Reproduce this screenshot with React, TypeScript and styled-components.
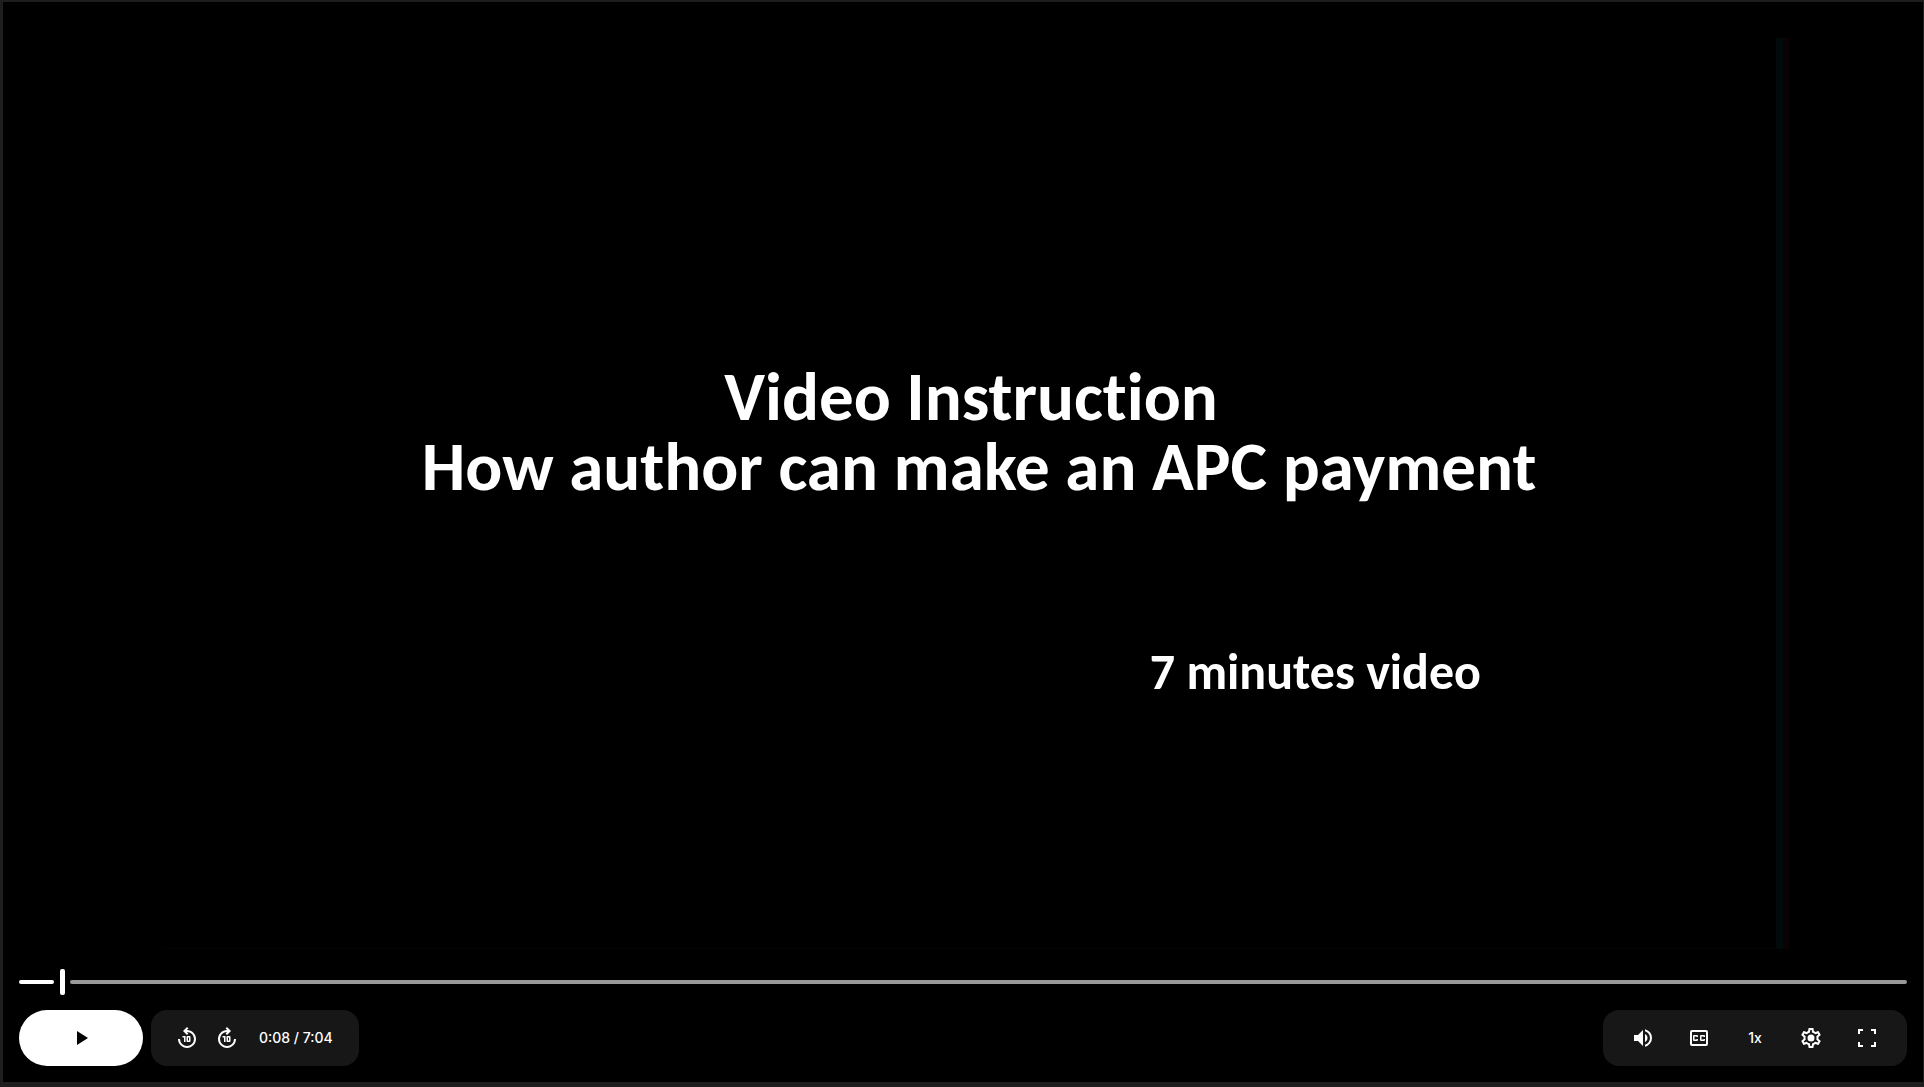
import React, { useState } from "react";
import styled, { createGlobalStyle } from "styled-components";

const GlobalStyle = createGlobalStyle`
  * { box-sizing: border-box; }
  body { margin: 0; background: #1e1e1e; }
`;

const Page = styled.div`
  min-height: 100vh;
  display: flex;
  padding: 2px 1px 5px 3px;
  background: #1e1e1e;
  color: #fff;
  font-family: Inter, Roboto, "Liberation Sans", sans-serif;
`;

const Player = styled.main`
  flex: 1;
  min-width: 0;
  display: flex;
  flex-direction: column;
  background: #000;
`;

const Frame = styled.section`
  flex: 1;
  display: flex;
  margin: 36px 140px 20px 160px;
  border-right: 7px solid #010b0b;
  border-bottom: 1px solid #040408;
  box-shadow: 6px 0 0 #0b0203;
  font-family: Carlito, Lato, "Open Sans", sans-serif;
  font-weight: 700;
  font-variant-ligatures: none;
`;

const Slide = styled.div`
  flex: 1;
  display: flex;
  flex-direction: column;
  padding-top: 324px;
`;

const Title = styled.h1`
  margin: 0;
  padding-left: 19px;
  font-size: 69px;
  line-height: 70px;
  text-align: center;
`;

const TitleLine = styled.span<{ $shift?: number }>`
  display: block;
  padding-right: ${(p) => p.$shift ?? 0}px;
`;

const Duration = styled.p`
  margin: 142px 295px 0 0;
  font-size: 50px;
  line-height: 56px;
  text-align: right;
`;

const Timeline = styled.div`
  position: relative;
  display: flex;
  align-items: center;
  gap: 5px;
  height: 26px;
  margin: 0 16px;
`;

const Track = styled.span<{ $played?: boolean }>`
  height: 4px;
  flex: ${(p) => (p.$played ? "0 0 35px" : "1")};
  border-radius: 2px;
  background: ${(p) => (p.$played ? "#fff" : "#999")};
`;

const Handle = styled.span`
  width: 5px;
  height: 26px;
  margin-left: 1px;
  border-radius: 2px;
  background: #fff;
`;

const Seek = styled.input`
  position: absolute;
  inset: 0;
  width: 100%;
  margin: 0;
  opacity: 0;
  cursor: pointer;
`;

const Controls = styled.div`
  display: flex;
  gap: 8px;
  padding: 15px 16px 16px;
`;

const PlayButton = styled.button`
  display: flex;
  align-items: center;
  justify-content: center;
  width: 124px;
  height: 56px;
  padding: 0;
  border: 0;
  border-radius: 28px;
  background: #fff;
  color: #000;
  cursor: pointer;
`;

const Group = styled.div<{ $end?: boolean }>`
  display: flex;
  align-items: center;
  height: 56px;
  padding: 0 ${(p) => (p.$end ? 12 : 16)}px;
  margin-left: ${(p) => (p.$end ? "auto" : "0")};
  border-radius: 16px;
  background: #171717;
`;

const ControlButton = styled.button<{ $wide?: boolean }>`
  display: flex;
  align-items: center;
  justify-content: center;
  width: ${(p) => (p.$wide ? 56 : 40)}px;
  height: 40px;
  padding: 0;
  border: 0;
  background: none;
  color: #fff;
  font: 500 14px/20px Inter, Roboto, sans-serif;
  cursor: pointer;
`;

const Time = styled.span`
  width: 96px;
  padding-left: 12px;
  font-size: 14px;
  font-weight: 500;
  line-height: 20px;
  white-space: pre;
`;

const Icon = ({ d }: { d: string }) => (
  <svg width="24" height="24" viewBox="0 0 24 24" fill="currentColor" fillRule="evenodd" aria-hidden="true">
    <path d={d} />
  </svg>
);

const TEN =
  "M9 16v-4.5H7.5V10h3v6zM12.5 16q-.425 0-.712-.288T11.5 15v-4q0-.425.288-.712T12.5 10h2q.425 0 .713.288t.287.712v4q0 .425-.288.713T14.5 16zm.5-1.5h1v-3h-1z";

const icons = {
  play: "M8 5v14l11-7z",
  back:
    "M12 22q-1.875 0-3.512-.712t-2.85-1.925t-1.925-2.85T3 13h2q0 2.925 2.038 4.963T12 20t4.963-2.037T19 13t-2.037-4.962T12 6h-.15l1.55 1.55L12 9L8 5l4-4l1.4 1.45L11.85 4H12q1.875 0 3.513.713t2.85 1.925t1.925 2.85T21 13t-.712 3.513t-1.925 2.85t-2.85 1.925T12 22" + TEN,
  forward:
    "M12 22q-1.875 0-3.512-.712t-2.85-1.925t-1.925-2.85T3 13t.713-3.512t1.924-2.85t2.85-1.925T12 4h.15L10.6 2.45L12 1l4 4l-4 4l-1.4-1.45L12.15 6H12Q9.075 6 7.038 8.038T5 13t2.038 4.963T12 20t4.963-2.037T19 13h2q0 1.875-.712 3.513t-1.925 2.85t-2.85 1.925T12 22" + TEN,
  volume:
    "M14 20.725v-2.05q2.25-.65 3.625-2.5t1.375-4.2t-1.375-4.2T14 5.275v-2.05q3.1.7 5.05 3.138T21 11.975t-1.95 5.613T14 20.725M3 15V9h4l5-5v16l-5-5zm11 1V7.95q1.175.55 1.838 1.65T16.5 12q0 1.275-.663 2.363T14 16",
  captions:
    "M5 4h14a2 2 0 0 1 2 2v12a2 2 0 0 1-2 2H5a2 2 0 0 1-2-2V6a2 2 0 0 1 2-2zm0 2v12h14V6zM7 9h3a1 1 0 0 1 1 1v1H9.500v-.5h-2v3h2V13H11v1a1 1 0 0 1-1 1H7a1 1 0 0 1-1-1v-4a1 1 0 0 1 1-1zM14 9h3a1 1 0 0 1 1 1v1h-1.500v-.5h-2v3h2V13H18v1a1 1 0 0 1-1 1h-3a1 1 0 0 1-1-1v-4a1 1 0 0 1 1-1z",
  settings:
    "M19.43 12.98c.04-.32.07-.64.07-.98 0-.34-.03-.66-.07-.98l2.11-1.65c.19-.15.24-.42.12-.64l-2-3.46c-.09-.16-.26-.25-.44-.25-.06 0-.12.01-.17.03l-2.49 1c-.52-.4-1.08-.73-1.69-.98l-.38-2.65C14.460 2.180 14.250 2 14 2h-4c-.25 0-.46.18-.49.42l-.38 2.65c-.61.25-1.17.59-1.69.98l-2.49-1c-.06-.02-.12-.03-.18-.03-.17 0-.34.09-.43.25l-2 3.460c-.13.22-.07.49.12.64l2.110 1.650c-.04.32-.07.65-.07.98 0 .33.03.66.07.98l-2.110 1.650c-.19.15-.24.42-.12.64l2 3.460c.09.16.26.25.44.25.06 0 .12-.01.17-.03l2.490-1c.52.4 1.080.73 1.690.98l.38 2.650c.03.24.24.42.49.42h4c.25 0 .46-.18.49-.42l.38-2.650c.61-.25 1.170-.59 1.690-.98l2.490 1c.06.02.12.03.18.03.17 0 .34-.09.43-.25l2-3.460c.12-.22.07-.49-.12-.64l-2.110-1.650zm-1.980-1.710c.04.31.05.52.05.73 0 .21-.02.43-.05.73l-.14 1.130.89.7 1.080.84-.7 1.210-1.270-.51-1.040-.42-.9.68c-.43.32-.84.56-1.250.73l-1.060.43-.16 1.130-.2 1.350h-1.400l-.19-1.350-.16-1.130-1.060-.43c-.43-.18-.83-.41-1.230-.71l-.91-.7-1.060.43-1.270.51-.7-1.210 1.080-.84.89-.7-.14-1.130c-.03-.31-.05-.54-.05-.74s.02-.43.05-.73l.14-1.130-.89-.7-1.080-.84.7-1.210 1.270.51 1.040.42.9-.68c.43-.32.84-.56 1.250-.73l1.060-.43.16-1.130.2-1.350h1.390l.19 1.350.16 1.130 1.060.43c.43.18.83.41 1.230.71l.91.7 1.060-.43 1.270-.51.7 1.210-1.070.85-.89.7.14 1.130zM12 8.500a3.500 3.500 0 1 0 0 7a3.500 3.500 0 0 0 0-7z",
  fullscreen: "M3 21v-5h2v3h3v2zm13 0v-2h3v-3h2v5zM3 8V3h5v2H5v3zm16 0V5h-3V3h5v5z",
};

export default function App() {
  const [position, setPosition] = useState(8);
  const clock = (s: number) => `${Math.floor(s / 60)}:${String(s % 60).padStart(2, "0")}`;
  const seek = (s: number) => setPosition(Math.max(0, Math.min(424, s)));

  return (
    <Page>
      <GlobalStyle />
      <Player>
        <Frame>
          <Slide>
            <Title>
              <TitleLine $shift={16}>Video Instruction</TitleLine>
              <TitleLine>How author can make an APC payment</TitleLine>
            </Title>
            <Duration>7 minutes video</Duration>
          </Slide>
        </Frame>
        <Timeline>
          <Track $played />
          <Handle />
          <Track />
          <Seek type="range" min={0} max={424} value={position} aria-label="Seek" onChange={(e) => seek(Number(e.target.value))} />
        </Timeline>
        <Controls>
          <PlayButton aria-label="Play"><Icon d={icons.play} /></PlayButton>
          <Group>
            <ControlButton aria-label="Back 10 seconds" onClick={() => seek(position - 10)}><Icon d={icons.back} /></ControlButton>
            <ControlButton aria-label="Forward 10 seconds" onClick={() => seek(position + 10)}><Icon d={icons.forward} /></ControlButton>
            <Time>{clock(position)} / {clock(424)}</Time>
          </Group>
          <Group $end>
            <ControlButton $wide aria-label="Volume"><Icon d={icons.volume} /></ControlButton>
            <ControlButton $wide aria-label="Captions"><Icon d={icons.captions} /></ControlButton>
            <ControlButton $wide aria-label="Playback speed">1x</ControlButton>
            <ControlButton $wide aria-label="Settings"><Icon d={icons.settings} /></ControlButton>
            <ControlButton $wide aria-label="Full screen"><Icon d={icons.fullscreen} /></ControlButton>
          </Group>
        </Controls>
      </Player>
    </Page>
  );
}
